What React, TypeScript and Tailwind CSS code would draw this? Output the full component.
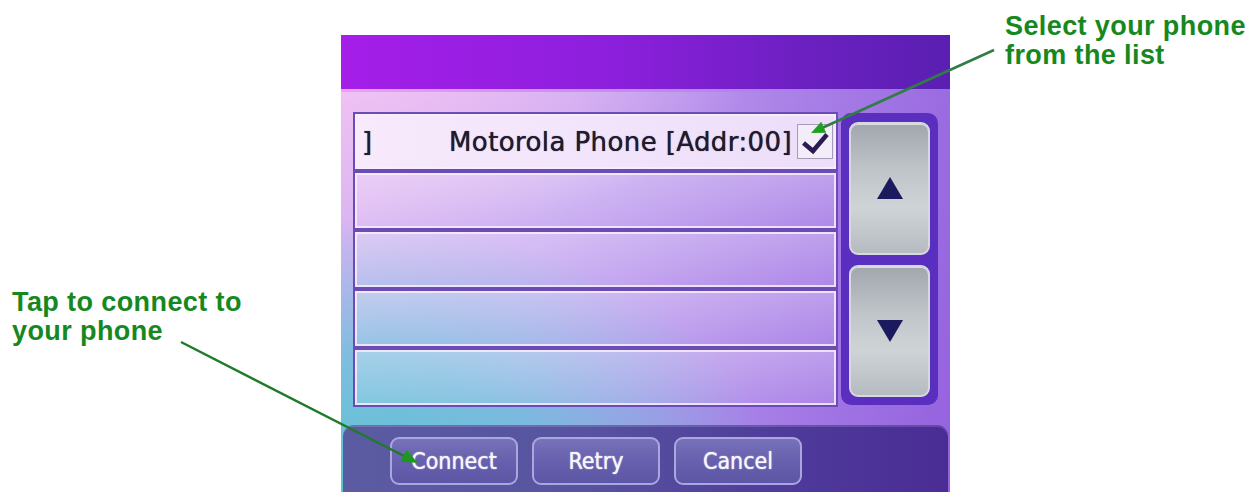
import type { ReactNode } from "react"

const listRows = [0, 1, 2, 3, 4]
const actions = ["Connect", "Retry", "Cancel"]

const Arrow = ({ down }: { down?: boolean }) => (
  <svg width="28" height="24" viewBox="0 0 28 24" className={down ? "rotate-180" : ""}>
    <path d="M14 1 L27 23 L1 23 Z" fill="#1b1a5e" />
  </svg>
)

const ScrollButton = ({ children }: { children: ReactNode }) => (
  <div className="flex-1 rounded-[9px] border-2 border-[#d6dadf] bg-[linear-gradient(180deg,#a2a6ad_0%,#bfc4c9_35%,#ced4d6_65%,#b6bbc1_100%)] shadow-[inset_0_1px_0_rgba(255,255,255,0.6)] flex items-center justify-center">
    {children}
  </div>
)

const PhoneRow = ({ selected }: { selected: boolean }) => (
  <div
    className={
      "h-[59px] border-2 border-[#6a4cb4] shadow-[inset_0_0_0_2px_rgba(248,236,255,0.85)] flex items-center " +
      (selected
        ? "bg-[linear-gradient(90deg,#f8eafc,#ecdef9)]"
        : "bg-[linear-gradient(180deg,rgba(255,255,255,0.3),rgba(255,255,255,0.12))]")
    }
  >
    {selected && (
      <>
        <span className="pl-[7px] text-[26px] leading-none text-[#221a2e] font-['DejaVu_Sans',sans-serif] [text-shadow:0_0_0.8px_#221a2e]">]</span>
        <span className="flex-1 text-right text-[26px] leading-none tracking-[0.4px] text-[#221a2e] font-['DejaVu_Sans',sans-serif] whitespace-nowrap [text-shadow:0_0_0.8px_#221a2e]">
          Motorola Phone [Addr:00]
        </span>
        <div className="ml-[5px] mr-[3px] w-[36px] h-[35px] bg-[#f3edf9] border border-[#a69cb8] flex items-center justify-center">
          <svg width="30" height="26" viewBox="0 0 30 26">
            <path d="M3.5 14 L13 22 L27 5.5" fill="none" stroke="#2c1a52" strokeWidth="4.5" strokeLinejoin="miter" />
          </svg>
        </div>
      </>
    )}
  </div>
)

export default function App() {
  return (
    <div className="relative w-[1251px] h-[498px] bg-white flex overflow-hidden font-['Liberation_Sans',Arial,sans-serif]">
      {/* left callout */}
      <div className="w-[341px] pl-[12px] pt-[288px] text-[27px] leading-[29px] font-bold tracking-[0.4px] text-[#16881e]">
        <p>Tap to connect to</p>
        <p>your phone</p>
      </div>

      {/* device screen */}
      <div className="w-[609px] h-[457px] mt-[35px] flex flex-col bg-[radial-gradient(90%_75%_at_0%_100%,#56c6d0_0%,rgba(100,192,218,0.75)_40%,rgba(140,170,230,0)_80%),radial-gradient(70%_45%_at_0%_0%,#f8c6f4_0%,rgba(244,196,244,0.6)_45%,rgba(230,190,244,0)_100%),linear-gradient(100deg,#dcb6f2_0%,#c4a4f0_35%,#a67ce6_72%,#9462de_100%)]">
        <div className="h-[54px] bg-[linear-gradient(90deg,#a51ee9_0%,#8c1fdc_45%,#6820be_80%,#5a1fb2_100%)]" />
        <div className="h-[3px] bg-[linear-gradient(90deg,#e2a6f4,#b488ec_60%,#9a6ce2)]" />

        <div className="flex px-[12px] pt-[20px] gap-[3px]">
          <div className="w-[485px] flex flex-col">
            {listRows.map((r) => (
              <PhoneRow key={r} selected={r === 0} />
            ))}
          </div>
          <div className="w-[97px] h-[292px] mt-[1px] rounded-[10px] bg-[#5a2fc0] pt-[9px] pb-[8px] px-[8px] flex flex-col gap-[10px]">
            <ScrollButton>
              <Arrow />
            </ScrollButton>
            <ScrollButton>
              <Arrow down />
            </ScrollButton>
          </div>
        </div>

        <div className="mt-auto mx-[2px] h-[67px] rounded-t-[11px] bg-[linear-gradient(90deg,#5b5ba2_0%,#5753a0_40%,#4e3a9a_75%,#4a2c95_100%)] shadow-[inset_0_2px_0_rgba(255,255,255,0.14)] pl-[47px] pt-[12px] flex gap-[14px]">
          {actions.map((a) => (
            <button
              key={a}
              className="w-[128px] h-[48px] rounded-[9px] border-2 border-[#aca6e0] bg-[linear-gradient(180deg,#7872ba_0%,#6660ae_50%,#5c56a6_100%)] text-[#f6f6fb] text-[23px] font-['DejaVu_Sans_Condensed','DejaVu_Sans',sans-serif] [font-stretch:condensed] [text-shadow:0_0_1.2px_#ffffff]"
            >
              {a}
            </button>
          ))}
        </div>
      </div>

      {/* right callout */}
      <div className="pl-[55px] pt-[12px] text-[27px] leading-[29px] font-bold tracking-[0.4px] text-[#16881e] whitespace-nowrap">
        <p>Select your phone</p>
        <p>from the list</p>
      </div>

      {/* callout arrows */}
      <svg className="absolute inset-0 pointer-events-none" width="1251" height="498" viewBox="0 0 1251 498">
        <line x1="994" y1="50" x2="822" y2="128" stroke="#2f7d45" strokeWidth="2.5" />
        <polygon points="811,133 826.2,132.7 821.2,121.7" fill="#1fa01f" />
        <line x1="181" y1="342" x2="406" y2="457" stroke="#1f7a2a" strokeWidth="2.5" />
        <polygon points="418,463 400.7,461.5 406.7,449.9" fill="#1a9a1a" />
      </svg>
    </div>
  )
}
